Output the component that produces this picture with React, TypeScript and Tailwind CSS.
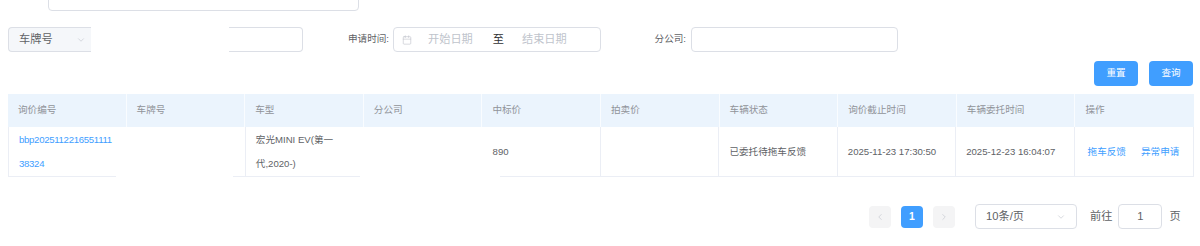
import React from "react";
import { ChevronDown, ChevronLeft, ChevronRight, Calendar } from "lucide-react";

const headers = ["询价编号", "车牌号", "车型", "分公司", "中标价", "拍卖价", "车辆状态", "询价截止时间", "车辆委托时间", "操作"];

export default function App() {
  return (
    <div
      className="relative w-[1200px] h-[246px] overflow-hidden bg-white text-[#606266]"
      style={{ fontFamily: '"Liberation Sans", "Noto Sans CJK SC", sans-serif' }}
    >
      {/* top input, mostly scrolled off */}
      <div className="-mt-[22px] ml-[48px] w-[311px] h-[33px] border border-[#dcdfe6] rounded" />

      {/* filter row */}
      <div className="mt-[16px] flex items-center h-[25px]">
        <div className="relative ml-[8px] flex w-[295px] h-[25px]">
          <div className="w-[84px] h-full flex items-center justify-between pl-[10px] pr-[6px] bg-[#f5f7fa] border border-r-0 border-[#dcdfe6] rounded-l text-[11.2px] text-[#606266]">
            <span>车牌号</span>
            <ChevronDown size={10} strokeWidth={1.5} className="text-[#c0c4cc]" />
          </div>
          <div className="flex-1 h-full border border-l-0 border-[#dcdfe6] rounded-r" />
          <div className="absolute left-[83px] -top-[2px] w-[138px] h-[29px] bg-white" />
        </div>

        <div className="w-[86px] text-right text-[9.6px]">申请时间:</div>
        <div className="ml-[4px] w-[208px] h-[25px] flex items-center pl-[8px] border border-[#dcdfe6] rounded text-[11.2px]">
          <Calendar size={10} strokeWidth={1.5} className="text-[#c0c4cc]" />
          <span className="ml-[16px] text-[#c0c4cc]">开始日期</span>
          <span className="ml-[20px] text-[#303133]">至</span>
          <span className="ml-[18px] text-[#c0c4cc]">结束日期</span>
        </div>

        <div className="w-[85px] text-right text-[9.6px]">分公司:</div>
        <div className="ml-[5px] w-[207px] h-[25px] border border-[#dcdfe6] rounded" />
      </div>

      {/* buttons */}
      <div className="mt-[9px] flex justify-end gap-[11px] pr-[7px]">
        <button className="w-[44px] h-[25px] rounded bg-[#409eff] text-white text-[9.6px]">重置</button>
        <button className="w-[44px] h-[25px] rounded bg-[#409eff] text-white text-[9.6px]">查询</button>
      </div>

      {/* table */}
      <div className="relative mt-[8px] ml-[8px] w-[1186px]">
        <div className="grid grid-cols-10 h-[33px] bg-[#ebf4fd] text-[9.6px] text-[#909399]">
          {headers.map((h, i) => (
            <div key={h} className={`flex items-center pl-[10px] ${i < 9 ? "border-r border-white/70" : ""}`}>
              {h}
            </div>
          ))}
        </div>
        <div className="grid grid-cols-10 h-[50px] border-b border-l border-r border-[#ebeef5] text-[9.6px] leading-[24px]">
          <div className="flex items-center pl-[10px] border-r border-[#ebeef5] text-[#409eff]">
            <div className="tracking-[-0.3px]">bbp2025112216551111<br />38324</div>
          </div>
          <div className="border-r border-[#ebeef5]" />
          <div className="flex items-center pl-[10px] border-r border-[#ebeef5]">
            <div>宏光MINI EV(第一<br />代,2020-)</div>
          </div>
          <div className="border-r border-[#ebeef5]" />
          <div className="flex items-center pl-[10px] border-r border-[#ebeef5]">890</div>
          <div className="border-r border-[#ebeef5]" />
          <div className="flex items-center pl-[10px] border-r border-[#ebeef5]">已委托待拖车反馈</div>
          <div className="flex items-center pl-[10px] border-r border-[#ebeef5]">2025-11-23 17:30:50</div>
          <div className="flex items-center pl-[10px] border-r border-[#ebeef5]">2025-12-23 16:04:07</div>
          <div className="flex items-center pl-[13px] gap-[15px] text-[#409eff]">
            <span>拖车反馈</span>
            <span>异常申请</span>
          </div>
        </div>
        {/* masked areas */}
        <div className="absolute left-[108px] top-[33px] w-[117px] h-[56px] bg-white" />
        <div className="absolute left-[352px] top-[33px] w-[130px] h-[56px] bg-white" />
        <div className="absolute left-[482px] top-[78px] w-[10px] h-[10px] bg-white" />
      </div>

      {/* pagination */}
      <div className="mt-[27px] ml-[869px] flex items-center h-[25px] text-[11.2px]">
        <div className="w-[22px] h-[22px] flex items-center justify-center rounded-sm bg-[#f4f4f5] text-[#c0c4cc]">
          <ChevronLeft size={10} strokeWidth={1.5} />
        </div>
        <div className="ml-[10px] w-[22px] h-[22px] flex items-center justify-center rounded-sm bg-[#409eff] text-white font-bold text-[10.4px]">
          1
        </div>
        <div className="ml-[10px] w-[22px] h-[22px] flex items-center justify-center rounded-sm bg-[#f4f4f5] text-[#c0c4cc]">
          <ChevronRight size={10} strokeWidth={1.5} />
        </div>
        <div className="ml-[20px] w-[102px] h-[25px] flex items-center justify-between pl-[10px] pr-[10px] border border-[#dcdfe6] rounded">
          <span>10条/页</span>
          <ChevronDown size={10} strokeWidth={1.5} className="text-[#c0c4cc]" />
        </div>
        <span className="ml-[13px]">前往</span>
        <div className="ml-[6px] w-[44px] h-[25px] flex items-center justify-center border border-[#dcdfe6] rounded">1</div>
        <span className="ml-[7px]">页</span>
      </div>
    </div>
  );
}
